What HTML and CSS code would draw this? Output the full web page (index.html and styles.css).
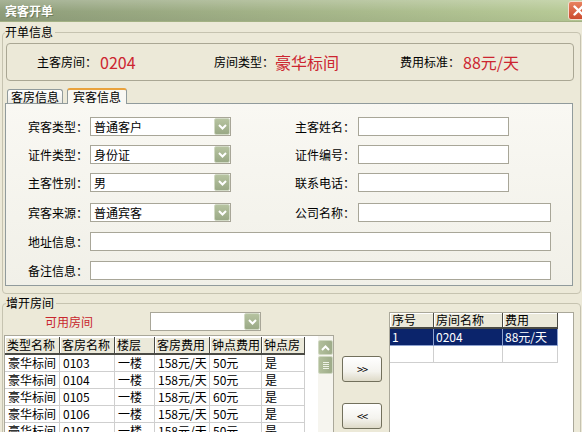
FILE: index.html
```html
<!DOCTYPE html>
<html lang="zh">
<head>
<meta charset="utf-8">
<title>宾客开单</title>
<link rel="stylesheet" href="styles.css">
</head>
<body>
<div class="window">
  <div class="titlebar">
    <span class="title">宾客开单</span>
    <span class="close"><svg width="11" height="11" viewBox="0 0 11 11"><path d="M1.5 1.5 L9.5 9.5 M9.5 1.5 L1.5 9.5" stroke="#fff" stroke-width="2.4" stroke-linecap="round"/></svg></span>
  </div>

  <fieldset class="group group-top">
    <legend>开单信息</legend>
    <div class="summary">
      <div class="sum-item"><span>主客房间：</span><span class="sum-val">0204</span></div>
      <div class="sum-item"><span>房间类型：</span><span class="sum-val big">豪华标间</span></div>
      <div class="sum-item"><span>费用标准：</span><span class="sum-val">88元/天</span></div>
    </div>

    <div class="tabs">
      <div class="tab">客房信息</div>
      <div class="tab active">宾客信息</div>
    </div>
    <div class="tabpanel">
      <div class="form">
        <div class="lbl">宾客类型：</div>
        <div class="field select"><span class="val">普通客户</span><span class="dd"><svg width="9" height="6" viewBox="0 0 9 6"><path d="M1 1 L4.5 4.5 L8 1" stroke="#fff" stroke-width="2" fill="none"/></svg></span></div>
        <div class="lbl c4">主客姓名：</div>
        <div class="field short"></div>

        <div class="lbl">证件类型：</div>
        <div class="field select"><span class="val">身份证</span><span class="dd"><svg width="9" height="6" viewBox="0 0 9 6"><path d="M1 1 L4.5 4.5 L8 1" stroke="#fff" stroke-width="2" fill="none"/></svg></span></div>
        <div class="lbl c4">证件编号：</div>
        <div class="field short"></div>

        <div class="lbl">主客性别：</div>
        <div class="field select"><span class="val">男</span><span class="dd"><svg width="9" height="6" viewBox="0 0 9 6"><path d="M1 1 L4.5 4.5 L8 1" stroke="#fff" stroke-width="2" fill="none"/></svg></span></div>
        <div class="lbl c4">联系电话：</div>
        <div class="field short"></div>

        <div class="lbl">宾客来源：</div>
        <div class="field select"><span class="val">普通宾客</span><span class="dd"><svg width="9" height="6" viewBox="0 0 9 6"><path d="M1 1 L4.5 4.5 L8 1" stroke="#fff" stroke-width="2" fill="none"/></svg></span></div>
        <div class="lbl c4">公司名称：</div>
        <div class="field"></div>

        <div class="lbl">地址信息：</div>
        <div class="field wide"></div>

        <div class="lbl">备注信息：</div>
        <div class="field wide"></div>
      </div>
    </div>
  </fieldset>

  <fieldset class="group group-bottom">
    <legend>增开房间</legend>
    <div class="add">
      <div class="left">
        <div class="avail">
          <span class="avail-lbl">可用房间</span>
          <div class="field select avail-sel"><span class="val"></span><span class="dd"><svg width="9" height="6" viewBox="0 0 9 6"><path d="M1 1 L4.5 4.5 L8 1" stroke="#fff" stroke-width="2" fill="none"/></svg></span></div>
        </div>
        <div class="list">
          <table class="grid">
            <colgroup><col class="w55"><col class="w55"><col class="w40"><col class="w55"><col class="w52"><col class="w43"></colgroup>
            <thead>
              <tr><th>类型名称</th><th>客房名称</th><th>楼层</th><th>客房费用</th><th>钟点费用</th><th>钟点房</th></tr>
            </thead>
            <tbody>
              <tr><td>豪华标间</td><td>0103</td><td>一楼</td><td>158元/天</td><td>50元</td><td>是</td></tr>
              <tr><td>豪华标间</td><td>0104</td><td>一楼</td><td>158元/天</td><td>50元</td><td>是</td></tr>
              <tr><td>豪华标间</td><td>0105</td><td>一楼</td><td>158元/天</td><td>60元</td><td>是</td></tr>
              <tr><td>豪华标间</td><td>0106</td><td>一楼</td><td>158元/天</td><td>50元</td><td>是</td></tr>
              <tr><td>豪华标间</td><td>0107</td><td>一楼</td><td>158元/天</td><td>50元</td><td>是</td></tr>
            </tbody>
          </table>
          <div class="vscroll">
            <span class="sb-btn"><svg width="9" height="6" viewBox="0 0 9 6"><path d="M1 5 L4.5 1.5 L8 5" stroke="#fff" stroke-width="2" fill="none"/></svg></span>
            <span class="sb-thumb"><i></i><i></i><i></i><i></i></span>
          </div>
        </div>
      </div>

      <div class="mid">
        <div class="btn">&gt;&gt;</div>
        <div class="btn">&lt;&lt;</div>
      </div>

      <div class="sel-list">
        <table class="grid2">
          <colgroup><col class="w44"><col class="w69"><col class="w55"></colgroup>
          <thead><tr><th>序号</th><th>房间名称</th><th>费用</th></tr></thead>
          <tbody>
            <tr class="selected"><td>1</td><td>0204</td><td>88元/天</td></tr>
            <tr><td></td><td></td><td></td></tr>
          </tbody>
        </table>
      </div>
    </div>
  </fieldset>
</div>
</body>
</html>
```

FILE: styles.css
```css
* { box-sizing: border-box; }
html, body { margin: 0; padding: 0; }
body {
  width: 582px;
  height: 432px;
  overflow: hidden;
  background: #ece9d8;
  color: #000;
  font-family: "Noto Sans CJK SC", "Noto Sans", sans-serif;
  font-size: 12px;
  line-height: 16px;
}
.window { width: 582px; height: 432px; overflow: hidden; }

/* title bar */
.titlebar {
  height: 22px;
  display: flex;
  align-items: center;
  justify-content: space-between;
  padding-left: 5px;
  background:
    linear-gradient(to bottom, rgba(255,255,255,0.22), rgba(255,255,255,0) 55%, rgba(0,0,0,0.04)),
    linear-gradient(to right, #8f9e7b, #a2b287 45%, #b8cb97);
  border-bottom: 1px solid #a3b184;
}
.title {
  color: #fff;
  font-weight: bold;
  font-size: 12px;
  text-shadow: 1px 1px 0 rgba(70, 80, 50, 0.45);
}
.close {
  width: 21px;
  height: 19px;
  margin-right: -7px;
  border: 1px solid #f3dccd;
  border-radius: 3px;
  background: linear-gradient(#e8825f, #cc4b2e);
  display: flex;
  align-items: center;
  justify-content: center;
}

/* group boxes */
.group {
  margin: 0 1px 0 2px;
  border: 1px solid #c6c3b0;
  border-radius: 4px;
  min-width: 0;
}
.group legend {
  padding: 0 2px 0 0;
  line-height: 16px;
}
.group-top {
  margin-top: 2px;
  padding: 3px 6px 7px 3px;
}
.group-top legend { margin-left: -1px; }
.group-bottom {
  margin-top: 1px;
  padding: 0 6px 0 1px;
  height: 160px;
}
.group-bottom legend { margin-left: 2px; }

/* summary */
.summary {
  height: 38px;
  border: 1px solid #aaa794;
  border-radius: 4px;
  display: grid;
  grid-template-columns: 177px 186px 1fr;
  align-items: center;
  padding-left: 30px;
}
.sum-item { display: flex; align-items: center; }
.sum-val {
  color: #cc2530;
  font-size: 16px;
  line-height: 20px;
  margin-left: 3px;
}
.sum-val.big { font-size: 16px; margin-left: 1px; }

/* tabs */
.tabs {
  display: flex;
  align-items: flex-end;
  height: 15px;
  margin-top: 7px;
  padding-left: 1px;
  position: relative;
  z-index: 1;
}
.tab {
  width: 56px;
  height: 14px;
  border: 1px solid #919b9c;
  border-bottom: none;
  border-radius: 3px 3px 0 0;
  background: linear-gradient(#ffffff, #ecebe5);
  text-align: center;
  line-height: 13px;
}
.tab.active {
  width: 60px;
  height: 16px;
  margin-left: 4px;
  margin-bottom: -1px;
  border-top: 2px solid #e9a23c;
  background: #f9f8f3;
  line-height: 14px;
}

.tabpanel {
  margin: 0 1px 0 -1px;
  height: 183px;
  border: 1px solid #919b9c;
  background: linear-gradient(#f9f8f3, #f1f0e8);
  padding: 13px 0 0 22px;
}

/* form */
.form {
  display: grid;
  grid-template-columns: 62px 141px 64px 63px 193px;
  grid-template-rows: 28px 28px 30px 29px 29px 19px;
  align-items: start;
}
.lbl {
  height: 19px;
  display: flex;
  align-items: center;
  grid-column: 1;
}
.c4 { grid-column: 4; }
.field {
  height: 19px;
  border: 1px solid #a8a698;
  background: #fff;
}
.short { width: 151px; }
.wide { grid-column: 2 / 6; }
.select {
  display: flex;
  align-items: center;
  justify-content: space-between;
}
.select .val { padding-left: 3px; line-height: 16px; }
.dd {
  width: 16px;
  height: 17px;
  border: 1px solid #d2dac5;
  border-radius: 2px;
  background: linear-gradient(#b6c3a0, #9aa986);
  display: flex;
  align-items: center;
  justify-content: center;
}

/* add rooms */
.add { display: flex; align-items: flex-start; }
.left { width: 330px; }
.avail {
  display: flex;
  align-items: center;
  height: 19px;
  margin-top: 1px;
  padding-left: 41px;
}
.avail-lbl { color: #c8262e; width: 105px; }
.avail-sel { width: 111px; }

.list {
  margin-top: 4px;
  height: 110px;
  border: 1px solid #aaa89a;
  background: #fff;
  display: flex;
  justify-content: space-between;
  align-items: stretch;
}
.grid {
  margin-top: 1px;
  width: 300px;
  border-collapse: separate;
  border-spacing: 0;
  table-layout: fixed;
  align-self: flex-start;
}
.w55 { width: 55px; }
.w40 { width: 40px; }
.w52 { width: 52px; }
.w43 { width: 43px; }
.w44 { width: 44px; }
.w69 { width: 69px; }

.grid th, .grid2 th {
  height: 18px;
  padding: 0 0 0 2px;
  font-weight: normal;
  text-align: left;
  white-space: nowrap;
  overflow: hidden;
  background: #ebe9da;
  border-right: 1px solid #4a4a44;
  border-bottom: 2px solid #4a4a44;
  box-shadow: inset 1px 1px 0 #ffffff;
  line-height: 16px;
}
.grid td, .grid2 td {
  height: 17px;
  padding: 0 0 0 3px;
  white-space: nowrap;
  overflow: hidden;
  border-right: 1px solid #cfcfcf;
  border-bottom: 1px solid #cfcfcf;
  line-height: 16px;
}

.vscroll {
  width: 15px;
  padding-top: 4px;
  background: #f6f5ef;
  display: flex;
  flex-direction: column;
  gap: 1px;
}
.sb-btn, .sb-thumb {
  width: 15px;
  border: 1px solid #d0d8c2;
  border-radius: 2px;
  background: linear-gradient(to right, #b2bf9c, #9eac89);
  display: flex;
  align-items: center;
  justify-content: center;
}
.sb-btn { height: 15px; }
.sb-thumb {
  height: 18px;
  flex-direction: column;
  gap: 1px;
}
.sb-thumb i {
  display: block;
  width: 6px;
  height: 1px;
  background: #eef2e6;
}

.mid {
  margin-left: 8px;
  width: 40px;
  padding-top: 45px;
  display: flex;
  flex-direction: column;
  gap: 21px;
}
.btn {
  height: 26px;
  border: 1px solid #72705c;
  border-radius: 3px;
  background: linear-gradient(#ffffff, #f4f3ee 60%, #dedac8);
  display: flex;
  align-items: center;
  justify-content: center;
  font-size: 11px;
  letter-spacing: -1px;
}

.sel-list {
  margin-left: 7px;
  margin-top: 1px;
  width: 185px;
  height: 125px;
  border: 1px solid #aaa89a;
  background: #fff;
}
.grid2 {
  width: 168px;
  border-collapse: separate;
  border-spacing: 0;
  table-layout: fixed;
}
.grid2 th { height: 16px; line-height: 14px; }
.grid2 td { padding-left: 2px; }
.grid2 .selected td {
  background: #0b246b;
  color: #fff;
  border-right-color: #8ea2d0;
  border-bottom-color: #8ea2d0;
}
```
